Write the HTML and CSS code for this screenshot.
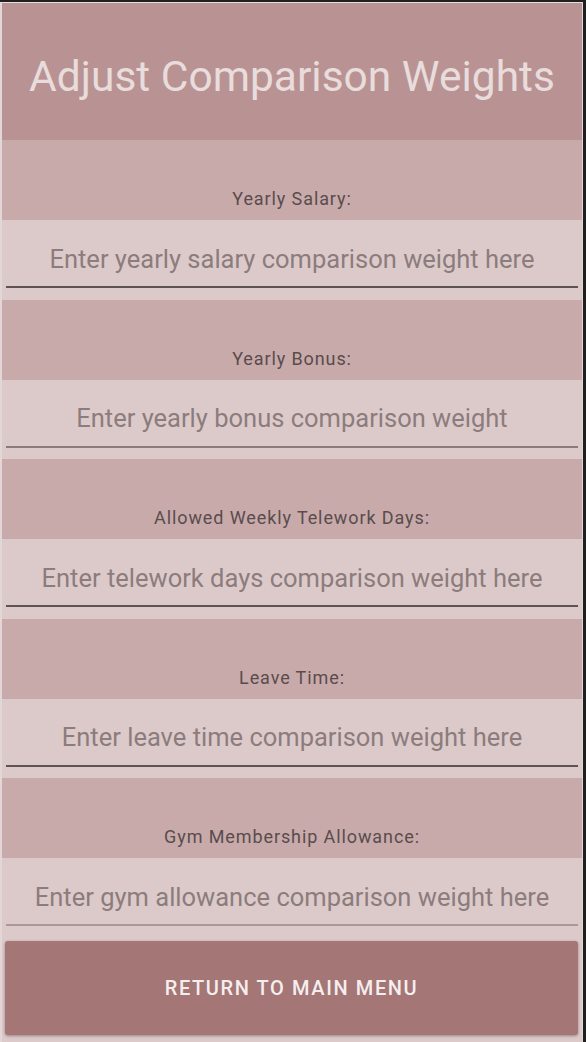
FILE: index.html
```html
<!DOCTYPE html>
<html>
<head>
<meta charset="utf-8">
<link rel="stylesheet" href="styles.css">
</head>
<body>
<div class="screen">
  <header class="title-bar"><h1 class="title">Adjust Comparison Weights</h1></header>
  <div class="field">
    <div class="label">Yearly Salary:</div>
    <div class="input-wrap"><div class="input dark">Enter yearly salary comparison weight here</div></div>
  </div>
  <div class="field">
    <div class="label">Yearly Bonus:</div>
    <div class="input-wrap"><div class="input mid">Enter yearly bonus comparison weight</div></div>
  </div>
  <div class="field">
    <div class="label">Allowed Weekly Telework Days:</div>
    <div class="input-wrap"><div class="input dark">Enter telework days comparison weight here</div></div>
  </div>
  <div class="field">
    <div class="label">Leave Time:</div>
    <div class="input-wrap"><div class="input dark">Enter leave time comparison weight here</div></div>
  </div>
  <div class="field">
    <div class="label">Gym Membership Allowance:</div>
    <div class="input-wrap"><div class="input light">Enter gym allowance comparison weight here</div></div>
  </div>
  <div class="btn-wrap"><button class="btn">RETURN TO MAIN MENU</button></div>
</div>
</body>
</html>
```
FILE: styles.css
```css
html, body { margin: 0; padding: 0; }
body {
  background: #1f1f1f;
  font-family: Roboto, "Noto Sans", sans-serif;
  height: 1042px;
  overflow: hidden;
}
.screen {
  margin: 2px 3px 0 0;
  border-left: 2px solid #e2d6d6;
  border-top: 1px solid #e8dede;
  border-right: 1px solid #e2d6d6;
  background: #dccacb;
  height: 1039px;
  display: flex;
  flex-direction: column;
}
.title-bar {
  background: #b99393;
  height: 137px;
  box-sizing: border-box;
  padding-top: 10px;
  display: flex;
  align-items: center;
  justify-content: center;
}
.title {
  margin: 0;
  font-weight: 400;
  font-size: 42.5px;
  color: #e8dcdc;
}
.label {
  background: #c8aaab;
  height: 80px;
  box-sizing: border-box;
  display: flex;
  align-items: flex-end;
  justify-content: center;
  padding-bottom: 11px;
  font-size: 18px;
  letter-spacing: 0.9px;
  color: #5a4c4c;
}
.input-wrap {
  height: 79.5px;
  box-sizing: border-box;
  padding: 0 4px 0 4px;
}
.input {
  height: 68px;
  box-sizing: border-box;
  display: flex;
  align-items: center;
  justify-content: center;
  padding-top: 11px;
  font-size: 25.5px;
  color: #8c7c7c;
  border-bottom: 2px solid #5e5252;
  white-space: nowrap;
}
.input.mid { border-bottom-color: #8a7a7a; }
.input.light { border-bottom-color: #aa9898; }
.btn-wrap {
  padding: 3px 4px 0 3px;
}
.btn {
  width: 100%;
  height: 94px;
  border: none;
  border-radius: 3px;
  background: #a47676;
  color: #f6eeee;
  font-family: Roboto, sans-serif;
  font-weight: 500;
  font-size: 20px;
  letter-spacing: 1.6px;
  padding-top: 2px;
  box-shadow: 0 1px 3px rgba(80,40,40,0.45);
}
```
